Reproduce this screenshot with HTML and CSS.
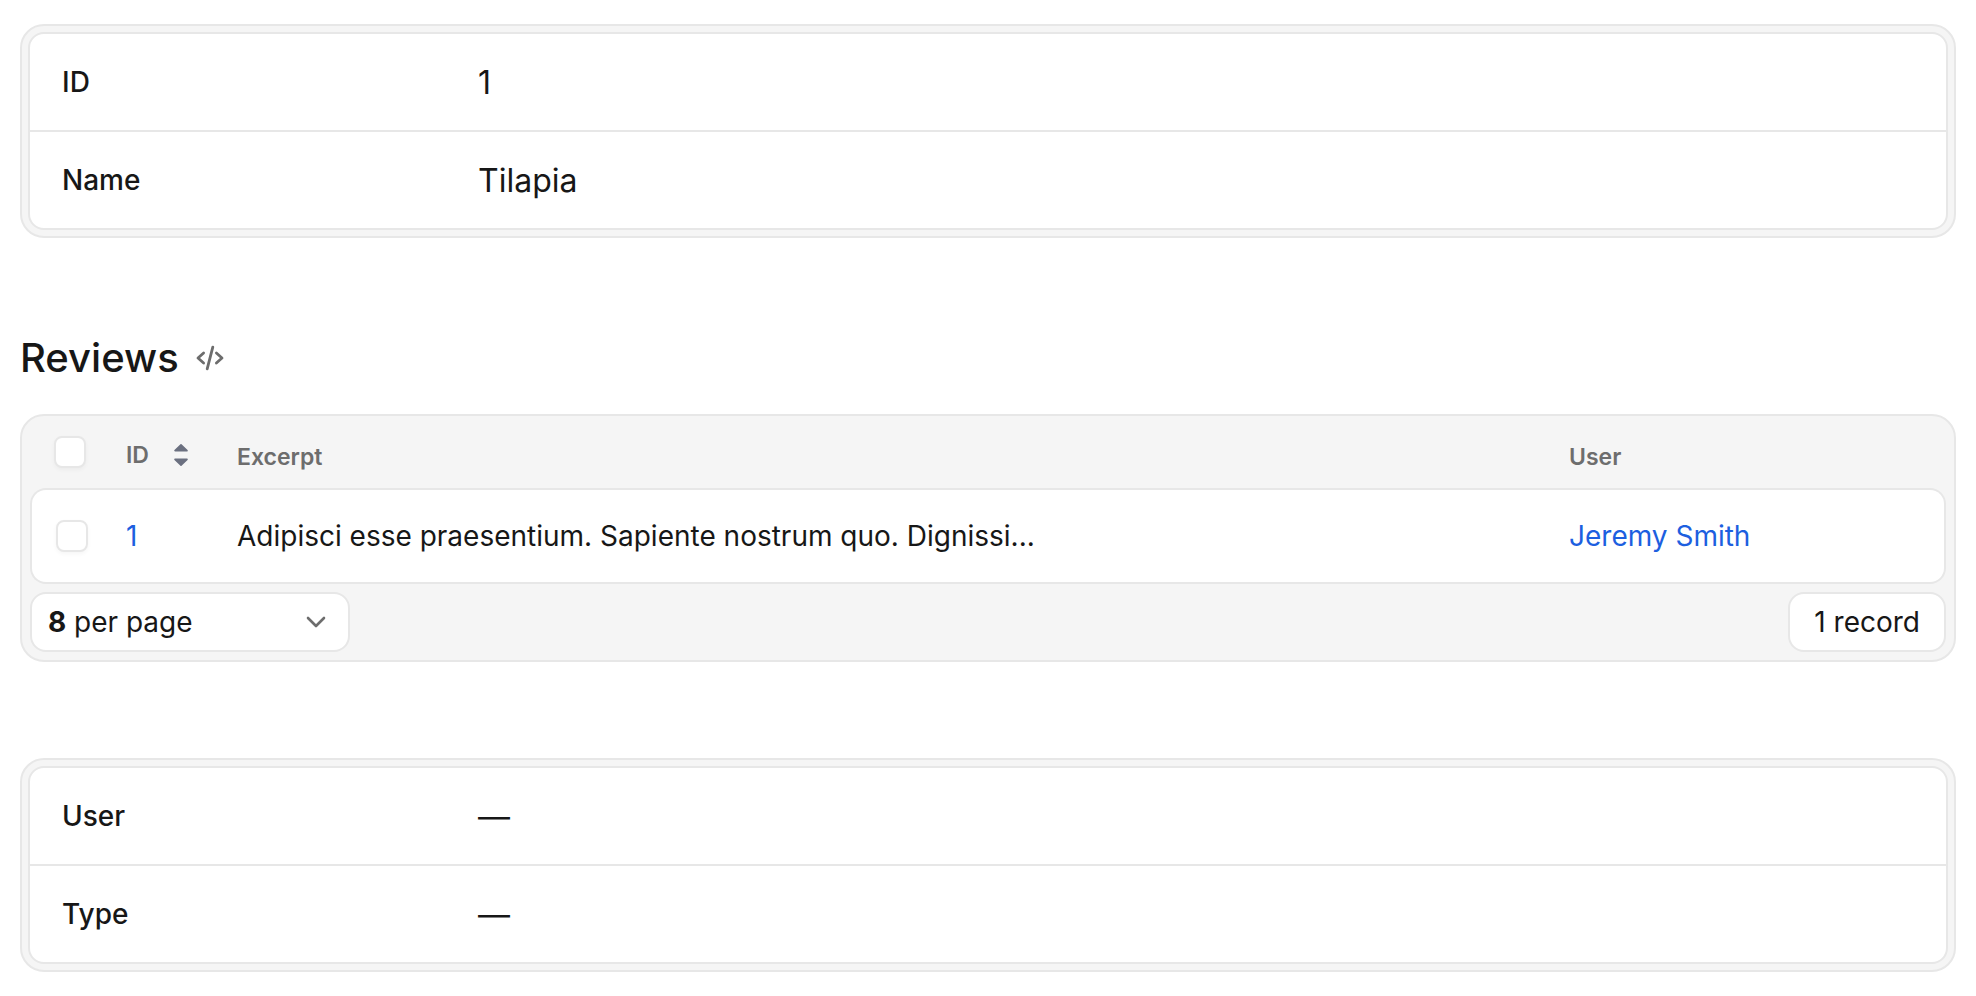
FILE: index.html
```
<!DOCTYPE html>
<html lang="en">
<head>
<meta charset="utf-8">
<meta name="viewport" content="width=device-width, initial-scale=1">
<title>Tilapia</title>
<link rel="stylesheet" href="styles.css">
</head>
<body>
<main class="page">
  <section class="panel">
    <dl class="fields">
      <div class="field"><dt class="field-label">ID</dt><dd class="field-value">1</dd></div>
      <div class="field"><dt class="field-label">Name</dt><dd class="field-value">Tilapia</dd></div>
    </dl>
  </section>

  <section class="reviews">
    <header class="section-head">
      <h2 class="section-title">Reviews</h2>
      <svg class="icon-code" viewBox="0 0 28 28" aria-hidden="true">
        <path d="M7.6 9 2 14l5.6 5M20.4 9l5.6 5-5.6 5M16.8 3.2l-5.6 21.6"/>
      </svg>
    </header>
    <div class="table-panel">
      <table class="records">
        <colgroup>
          <col class="col-check"><col class="col-id"><col><col class="col-user">
        </colgroup>
        <thead>
          <tr>
            <th class="check-head"><input class="checkbox" type="checkbox" aria-label="Select all"></th>
            <th>
              <button class="sort" type="button">ID
                <svg class="icon-sort" viewBox="0 0 16 24" aria-hidden="true">
                  <path d="M8 1.8 14 7.6H2ZM8 22.2 2 16.4H14Z"/>
                </svg>
              </button>
            </th>
            <th>Excerpt</th>
            <th>User</th>
          </tr>
        </thead>
        <tbody>
          <tr>
            <td class="check-cell"><input class="checkbox" type="checkbox" aria-label="Select review 1"></td>
            <td><a class="link" href="#review-1">1</a></td>
            <td>Adipisci esse praesentium. Sapiente nostrum quo. Dignissi...</td>
            <td><a class="link" href="#user">Jeremy Smith</a></td>
          </tr>
        </tbody>
      </table>
      <footer class="table-foot">
        <div class="per-page">
          <select class="per-page-select" id="per-page">
            <option>8</option><option>16</option><option>24</option>
          </select>
          <label class="per-page-label" for="per-page">per page</label>
          <svg class="icon-chevron" viewBox="0 0 20 12" aria-hidden="true"><path d="m2 2 8 8 8-8"/></svg>
        </div>
        <p class="count">1 record</p>
      </footer>
    </div>
  </section>

  <section class="panel">
    <dl class="fields">
      <div class="field"><dt class="field-label">User</dt><dd class="field-value">—</dd></div>
      <div class="field"><dt class="field-label">Type</dt><dd class="field-value">—</dd></div>
    </dl>
  </section>
</main>
</body>
</html>
```
FILE: styles.css
```
:root {
  --line: #e7e7e7;
  --surface: #f5f5f5;
  --text: #171717;
  --muted: #6d6d6d;
  --link: #1d5fe0;
}

* { box-sizing: border-box; }

body {
  margin: 0;
  background: #fff;
  color: var(--text);
  font-family: Inter, "Liberation Sans", sans-serif;
  font-size: 28px;
}

.page {
  display: flex;
  flex-direction: column;
  gap: 96px;
  padding: 24px 20px;
}

.panel {
  padding: 6px;
  border: 2px solid var(--line);
  border-radius: 24px;
  background: var(--surface);
}

.fields {
  margin: 0;
  border: 2px solid var(--line);
  border-radius: 16px;
  background: #fff;
}

.field {
  display: grid;
  grid-template-columns: 416px 1fr;
  align-items: center;
  min-height: 96px;
  padding: 0 32px;
}

.field + .field {
  min-height: 98px;
  border-top: 2px solid var(--line);
}

.field-label { font-weight: 500; }

.field-value {
  margin: 0;
  font-size: 32px;
}

.section-head {
  display: flex;
  align-items: center;
  gap: 17px;
  margin-bottom: 32px;
}

.section-title {
  margin: 0;
  font-size: 40px;
  font-weight: 500;
  line-height: 48px;
}

.icon-code {
  width: 28px;
  height: 28px;
  fill: none;
  stroke: var(--muted);
  stroke-width: 2.8;
  stroke-linecap: round;
  stroke-linejoin: round;
}

.table-panel {
  padding: 0 8px 8px;
  border: 2px solid var(--line);
  border-radius: 24px;
  background: var(--surface);
}

.records {
  width: 100%;
  table-layout: fixed;
  border-collapse: separate;
  border-spacing: 0;
}

.col-check { width: 80px; }
.col-id { width: 111px; }
.col-user { width: 393px; }

.records th {
  height: 72px;
  padding: 10px 0 0 16px;
  color: var(--muted);
  font-size: 23px;
  font-weight: 600;
  text-align: left;
}

.records td {
  height: 96px;
  padding: 0 0 0 16px;
  border: solid var(--line);
  border-width: 2px 0;
  background: #fff;
}

.records td:first-child {
  border-left-width: 2px;
  border-radius: 16px 0 0 16px;
}

.records td:last-child {
  border-right-width: 2px;
  border-radius: 0 16px 16px 0;
}

.records .check-head,
.records .check-cell { padding: 0 0 0 24px; }

.checkbox {
  display: block;
  width: 32px;
  height: 32px;
  margin: 0;
  appearance: none;
  border: 2px solid var(--line);
  border-radius: 8px;
  background: #fff;
  box-shadow: 0 2px 4px rgb(0 0 0 / 4%);
}

.sort {
  display: flex;
  align-items: center;
  gap: 24px;
  padding: 0 0 4px;
  border: 0;
  background: none;
  color: inherit;
  font: inherit;
}

.icon-sort {
  width: 16px;
  height: 24px;
  fill: #6b7080;
  stroke: #6b7080;
  stroke-width: 1.6;
  stroke-linejoin: round;
}

.link {
  color: var(--link);
  text-decoration: none;
}

.table-foot {
  display: flex;
  justify-content: space-between;
  margin-top: 8px;
}

.per-page {
  display: grid;
  align-items: center;
  width: 320px;
  height: 60px;
}

.per-page > * { grid-area: 1 / 1; }

.per-page-select {
  width: 100%;
  height: 100%;
  padding: 0 16px;
  appearance: none;
  border: 2px solid var(--line);
  border-radius: 16px;
  background: #fff;
  color: inherit;
  font: inherit;
  font-weight: 700;
}

.per-page-label {
  padding-left: 44px;
  pointer-events: none;
}

.icon-chevron {
  justify-self: end;
  width: 20px;
  height: 12px;
  margin-right: 24px;
  fill: none;
  stroke: var(--muted);
  stroke-width: 2.6;
  stroke-linecap: round;
  stroke-linejoin: round;
  pointer-events: none;
}

.count {
  display: flex;
  align-items: center;
  height: 60px;
  margin: 0;
  padding: 0 24px;
  border: 2px solid var(--line);
  border-radius: 16px;
  background: #fff;
}
```
